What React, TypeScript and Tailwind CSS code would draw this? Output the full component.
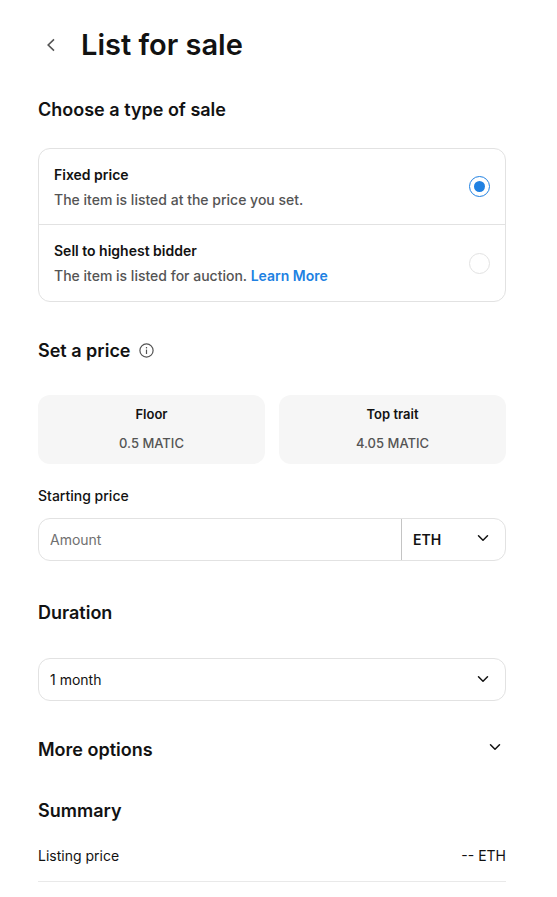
import { ChevronDown } from "lucide-react";

const heading = "text-lg leading-6 font-semibold";
const field = "h-[43px] rounded-xl border border-[#e2e2e2]";

function BackIcon() {
  return (
    <svg width="8" height="14" viewBox="0 0 8 14" fill="none" stroke="#545454" strokeWidth="1.6" aria-hidden="true">
      <path d="M7 1.4 1.2 7 7 12.6" />
    </svg>
  );
}

function InfoIcon() {
  return (
    <svg width="16" height="16" viewBox="0 0 16 16" fill="none" stroke="#545454" strokeWidth="1.2" aria-hidden="true">
      <circle cx="7.5" cy="7.5" r="6.6" />
      <path d="M7.5 6.6v4.4" />
      <path d="M7.5 4v1.4" />
    </svg>
  );
}

function SaleOption({ id, title, text, link, checked }: { id: string; title: string; text: string; link?: string; checked?: boolean }) {
  return (
    <div className="flex h-[76px] items-center justify-between px-[15px]">
      <div className="text-sm leading-[25px]">
        <label htmlFor={id} className="block font-semibold">{title}</label>
        <p className="font-medium text-[#545454]">
          {text} {link && <a href="#learn" className="font-semibold text-[#2081e2]">{link}</a>}
        </p>
      </div>
      <input
        id={id}
        type="radio"
        name="sale"
        defaultChecked={checked}
        className="size-[21px] shrink-0 appearance-none rounded-full border border-[#e2e2e2] bg-white bg-clip-content p-1 checked:border-[#2081e2] checked:bg-[#2081e2]"
      />
    </div>
  );
}

function PriceButton({ label, price }: { label: string; price: string }) {
  return (
    <button type="button" className="h-[69px] rounded-xl bg-[#f6f6f6] pb-0.5 text-[13px] leading-[29px]">
      <span className="block font-semibold">{label}</span>
      <span className="block font-medium text-[#545454]">{price}</span>
    </button>
  );
}

export default function App() {
  return (
    <main className="bg-white pt-[25px] pr-[51px] pb-4 pl-[38px] font-['Inter',sans-serif] text-[#121212]">
      <header className="flex items-center gap-[18px]">
        <button type="button" aria-label="Back" className="flex size-[25px] items-center justify-center">
          <BackIcon />
        </button>
        <h1 className="text-[29px] leading-10 font-semibold">List for sale</h1>
      </header>

      <h2 className={`mt-[33px] ${heading}`}>Choose a type of sale</h2>
      <div className="mt-[26px] divide-y divide-[#e2e2e2] rounded-xl border border-[#e2e2e2]">
        <SaleOption id="fixed" title="Fixed price" text="The item is listed at the price you set." checked />
        <SaleOption id="auction" title="Sell to highest bidder" text="The item is listed for auction." link="Learn More" />
      </div>

      <h2 className={`mt-[37px] flex items-center gap-2 ${heading}`}>
        Set a price <InfoIcon />
      </h2>
      <div className="mt-8 grid grid-cols-2 gap-[14px]">
        <PriceButton label="Floor" price="0.5 MATIC" />
        <PriceButton label="Top trait" price="4.05 MATIC" />
      </div>

      <label htmlFor="amount" className="mt-[22px] block text-sm leading-5 font-medium">Starting price</label>
      <div className={`mt-3 flex ${field}`}>
        <input id="amount" placeholder="Amount" className="min-w-0 grow pl-[11px] text-sm outline-none placeholder:text-[#707070]" />
        <div className="relative w-[104px] border-l border-[#c4c4c4]">
          <select aria-label="Currency" className="size-full appearance-none pl-[11px] text-sm font-semibold outline-none">
            <option>ETH</option>
          </select>
          <ChevronDown size={18} className="pointer-events-none absolute top-[10px] right-[13px]" />
        </div>
      </div>

      <h2 className={`mt-10 ${heading}`}>
        <label htmlFor="duration">Duration</label>
      </h2>
      <div className={`relative mt-[33px] ${field}`}>
        <select id="duration" className="size-full appearance-none pl-[11px] text-sm outline-none">
          <option>1 month</option>
        </select>
        <ChevronDown size={18} className="pointer-events-none absolute top-[11px] right-[13px]" />
      </div>

      <h2 className={`mt-[37px] ${heading}`}>
        <button type="button" className="flex w-full items-start justify-between pr-[2px]">
          More options <ChevronDown size={18} />
        </button>
      </h2>

      <h2 className={`mt-[37px] ${heading}`}>Summary</h2>
      <div className="mt-[23px] flex justify-between border-b border-[#e9e9e9] pb-[15px] text-sm leading-5">
        <span>Listing price</span>
        <span>-- ETH</span>
      </div>
    </main>
  );
}
